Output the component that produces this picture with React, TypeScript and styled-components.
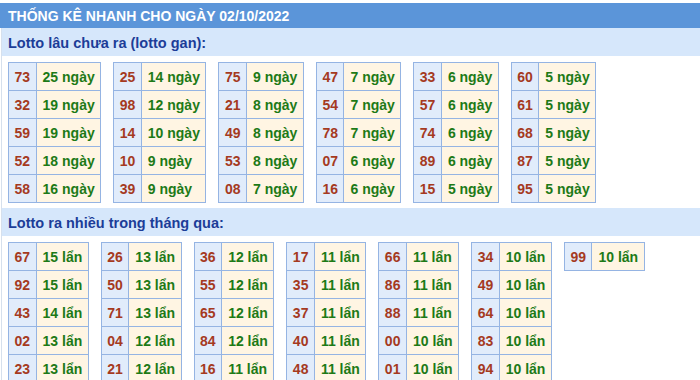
import styled, { createGlobalStyle } from "styled-components";

const GlobalStyle = createGlobalStyle`
  body {
    margin: 0;
    background: #ffffff;
    font-family: "Liberation Sans", Arial, sans-serif;
  }
`

const Wrapper = styled.div`
  width: 700px;
  padding-top: 3px;
`

const Header = styled.div`
  height: 25px;
  display: flex;
  align-items: center;
  padding: 0 8px;
  background: #5b95d9;
  color: #ffffff;
  font-weight: 700;
  font-size: 14px;
`

const Body = styled.div`
  margin-left: 1px;
  border-left: 1px solid #d6e0ed;
`

const SectionTitle = styled.div`
  height: 27px;
  display: flex;
  align-items: center;
  padding: 1px 6px 0;
  margin-bottom: 6px;
  background: #d6e7fb;
  color: #1c3d98;
  font-weight: 700;
  font-size: 14.5px;
`

const TableRow = styled.div`
  display: flex;
  align-items: flex-start;
  gap: 12px;
  padding: 0 6px;
  margin-bottom: 5px;
`

const StatTable = styled.table`
  border-collapse: collapse;
  font-size: 14px;
  font-weight: 700;
`

const NumCell = styled.td`
  height: 27px;
  padding: 0 5.5px;
  border: 1px solid #95b4e3;
  background: #e1ecfb;
  color: #a53a1f;
  text-align: center;
  white-space: nowrap;
`

const ValueCell = styled.td`
  height: 27px;
  padding: 0 5.5px 0 6px;
  border: 1px solid #95b4e3;
  background: #fff5e3;
  color: #1d7a17;
  white-space: nowrap;
`

type Entry = [string, number];

const ganTables: Entry[][] = [
  [["73", 25], ["32", 19], ["59", 19], ["52", 18], ["58", 16]],
  [["25", 14], ["98", 12], ["14", 10], ["10", 9], ["39", 9]],
  [["75", 9], ["21", 8], ["49", 8], ["53", 8], ["08", 7]],
  [["47", 7], ["54", 7], ["78", 7], ["07", 6], ["16", 6]],
  [["33", 6], ["57", 6], ["74", 6], ["89", 6], ["15", 5]],
  [["60", 5], ["61", 5], ["68", 5], ["87", 5], ["95", 5]],
];

const freqTables: Entry[][] = [
  [["67", 15], ["92", 15], ["43", 14], ["02", 13], ["23", 13]],
  [["26", 13], ["50", 13], ["71", 13], ["04", 12], ["21", 12]],
  [["36", 12], ["55", 12], ["65", 12], ["84", 12], ["16", 11]],
  [["17", 11], ["35", 11], ["37", 11], ["40", 11], ["48", 11]],
  [["66", 11], ["86", 11], ["88", 11], ["00", 10], ["01", 10]],
  [["34", 10], ["49", 10], ["64", 10], ["83", 10], ["94", 10]],
  [["99", 10]],
];

const Group = ({ tables, unit }: { tables: Entry[][]; unit: string }) => (
  <TableRow>
    {tables.map((rows, i) => (
      <StatTable key={i}>
        <tbody>
          {rows.map(([num, count]) => (
            <tr key={num}>
              <NumCell>{num}</NumCell>
              <ValueCell>{count + " " + unit}</ValueCell>
            </tr>
          ))}
        </tbody>
      </StatTable>
    ))}
  </TableRow>
)

const App = () => {
  return (
    <Wrapper>
      <GlobalStyle />
      <Header>THỐNG KÊ NHANH CHO NGÀY 02/10/2022</Header>
      <Body>
        <SectionTitle>Lotto lâu chưa ra (lotto gan):</SectionTitle>
        <Group tables={ganTables} unit="ngày" />
        <SectionTitle>Lotto ra nhiều trong tháng qua:</SectionTitle>
        <Group tables={freqTables} unit="lẩn" />
      </Body>
    </Wrapper>
  )
}

export default App;
